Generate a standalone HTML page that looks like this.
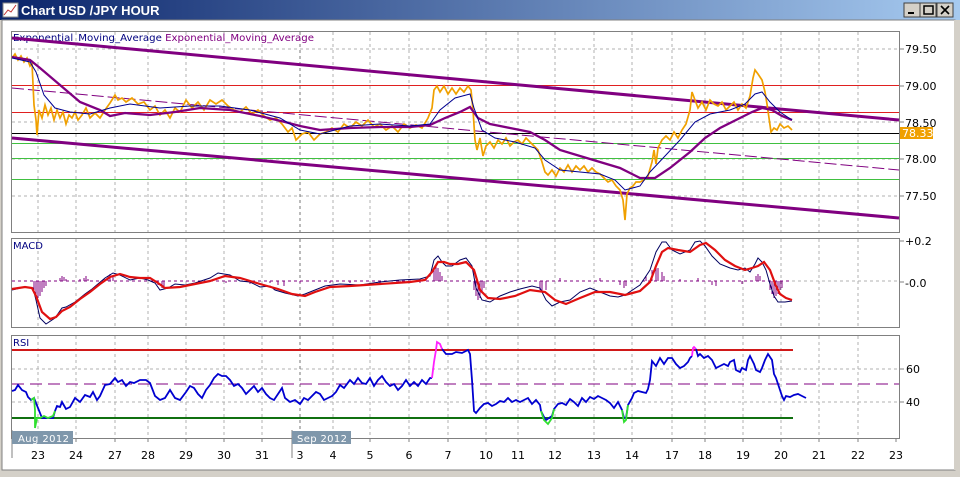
<!DOCTYPE html>
<html><head><meta charset="utf-8"><style>
body{margin:0;width:960px;height:472px;overflow:hidden;background:#d4d0c8;font-family:"Liberation Sans",sans-serif}
</style></head><body>
<svg width="960" height="472" xmlns="http://www.w3.org/2000/svg" font-family="DejaVu Sans, sans-serif">
<defs><linearGradient id="tb" x1="0" x2="1"><stop offset="0" stop-color="#0a246a"/><stop offset="1" stop-color="#a6caf0"/></linearGradient></defs>
<rect x="0" y="0" width="960" height="472" fill="#d4d0c8"/>
<rect x="0" y="0" width="960" height="20" fill="url(#tb)"/>
<rect x="3" y="3" width="15" height="14" fill="#fff" stroke="#888"/>
<polyline points="4,15 8,10 11,12 16,5" fill="none" stroke="#c03030" stroke-width="1"/>
<text x="21" y="15" font-size="13" font-weight="bold" fill="#fff" font-family="Liberation Sans, sans-serif">Chart USD /JPY  HOUR</text>
<g stroke="#404040" fill="#d4d0c8"><rect x="904" y="3" width="16" height="14"/><rect x="920" y="3" width="16" height="14"/><rect x="937" y="3" width="16" height="14"/></g>
<rect x="908" y="12" width="6" height="2" fill="#000"/>
<rect x="924" y="6" width="9" height="8" fill="none" stroke="#000" stroke-width="1.5"/>
<path d="M941 6 L949 14 M949 6 L941 14" stroke="#000" stroke-width="1.6"/>
<rect x="2" y="20" width="953" height="450" fill="#fff" stroke="#808080"/>
<line x1="955" y1="20" x2="955" y2="470" stroke="#d4d0c8" stroke-width="2"/>
<g fill="none" stroke="#808080"><rect x="11.5" y="31.5" width="888" height="201"/><rect x="11.5" y="238.5" width="888" height="89"/><rect x="11.5" y="335.5" width="888" height="103"/></g>
<g stroke="#b0b0b0" stroke-dasharray="3,3">
<path d="M38 32V232M76 32V232M115 32V232M148 32V232M186 32V232M224 32V232M262 32V232M333 32V232M370 32V232M409 32V232M448 32V232M486 32V232M518 32V232M555 32V232M594 32V232M632 32V232M672 32V232M705 32V232M743 32V232M781 32V232M819 32V232M858 32V232"/>
<path d="M38 239V327M76 239V327M115 239V327M148 239V327M186 239V327M224 239V327M262 239V327M333 239V327M370 239V327M409 239V327M448 239V327M486 239V327M518 239V327M555 239V327M594 239V327M632 239V327M672 239V327M705 239V327M743 239V327M781 239V327M819 239V327M858 239V327"/>
<path d="M38 336V438M76 336V438M115 336V438M148 336V438M186 336V438M224 336V438M262 336V438M333 336V438M370 336V438M409 336V438M448 336V438M486 336V438M518 336V438M555 336V438M594 336V438M632 336V438M672 336V438M705 336V438M743 336V438M781 336V438M819 336V438M858 336V438"/>
<path d="M12 49H899M12 122H899M12 159H899M12 196H899M12 369H899M12 402H899M12 281H899"/>
</g>
<path d="M300 32V232M300 239V327M300 336V438" stroke="#777" stroke-dasharray="3,3"/>
<text x="13" y="41" font-size="10" fill="#000080" textLength="301" lengthAdjust="spacingAndGlyphs">Exponential_Moving_Average <tspan fill="#800080">Exponential_Moving_Average</tspan></text>
<line x1="12" y1="85.5" x2="899" y2="85.5" stroke="#e02020"/>
<line x1="12" y1="112.5" x2="899" y2="112.5" stroke="#e02020"/>
<line x1="12" y1="133.5" x2="899" y2="133.5" stroke="#000"/>
<line x1="12" y1="143.5" x2="899" y2="143.5" stroke="#40c040"/>
<line x1="12" y1="158.5" x2="899" y2="158.5" stroke="#40c040"/>
<line x1="12" y1="179.5" x2="899" y2="179.5" stroke="#40c040"/>
<line x1="12" y1="38" x2="899" y2="120" stroke="#800080" stroke-width="3"/>
<line x1="12" y1="138" x2="899" y2="218" stroke="#800080" stroke-width="3"/>
<line x1="12" y1="88" x2="899" y2="170" stroke="#800080" stroke-dasharray="12,4"/>
<polyline fill="none" stroke="#f0a000" stroke-width="1.7" points="12,58 15,54 18,60 21,56 24,62 27,58 30,66 32,63 34,105 36,120 37,135 39,110 42,118 45,105 48,115 51,108 54,120 57,110 60,118 63,112 66,124 69,115 72,118 75,112 78,120 82,115 86,108 90,118 95,113 100,118 105,110 110,103 115,95 118,100 122,98 126,102 132,98 138,104 144,102 150,110 155,106 160,115 165,110 170,118 175,108 180,112 186,100 192,108 198,102 204,110 210,100 216,104 222,100 228,106 234,110 240,112 246,107 252,114 258,110 264,116 270,120 276,118 282,124 288,132 292,128 296,140 302,134 308,132 314,140 320,134 326,132 332,128 338,132 344,124 350,128 356,122 362,126 368,120 374,127 380,124 386,130 392,126 398,132 404,124 410,128 416,125 422,128 428,118 432,108 434,90 437,86 440,92 444,86 448,94 452,88 456,94 460,88 464,92 468,86 471,90 473,110 475,140 477,150 480,138 483,156 486,146 490,142 494,148 498,140 502,144 506,138 510,146 514,142 518,140 522,144 526,138 530,142 534,146 538,150 542,162 545,172 548,175 552,170 556,176 560,168 564,172 568,165 572,172 576,166 580,170 584,166 588,172 592,168 596,172 600,174 604,178 608,182 612,180 616,186 620,190 623,200 625,220 627,194 630,188 633,186 636,182 640,182 644,180 648,176 652,162 654,150 656,164 658,148 662,140 666,136 670,140 674,132 678,138 682,130 686,124 690,110 692,92 695,100 698,108 702,102 706,110 710,100 714,104 718,106 722,102 726,110 730,106 734,102 738,110 742,104 746,108 750,96 753,78 755,70 758,74 762,80 765,92 767,104 769,118 771,132 774,128 777,130 780,124 784,128 788,126 792,130"/>
<polyline fill="none" stroke="#800080" stroke-width="2.3" points="12,57 30,60 40,68 60,85 80,102 100,110 110,116 125,113 150,115 175,112 200,108 230,110 260,116 285,122 300,126 320,130 350,128 380,127 410,127 430,125 445,118 460,112 470,107 478,118 490,124 510,128 530,132 545,140 560,150 580,156 600,162 620,168 640,178 655,178 670,168 690,152 705,138 720,128 740,118 752,112 762,108 772,110 782,116 792,120"/>
<polyline fill="none" stroke="#000090" stroke-width="1" points="12,58 30,62 36,72 44,95 55,108 70,112 90,114 110,108 130,104 160,108 190,106 220,106 250,110 280,118 300,130 320,134 350,126 380,124 410,126 430,124 440,110 455,98 470,94 474,108 482,130 495,138 515,142 535,148 545,160 560,170 580,172 600,174 615,180 625,190 640,186 650,172 665,156 680,140 695,122 710,114 730,110 745,104 755,94 762,92 770,102 780,112 792,120"/>
<rect x="900" y="127" width="33" height="12" fill="#f0a000"/>
<text x="902" y="137" font-size="11" fill="#fff">78.33</text>
<g font-size="11" fill="#000"><text x="905" y="53">79.50</text><text x="905" y="90">79.00</text><text x="905" y="127">78.50</text><text x="905" y="163">78.00</text><text x="905" y="200">77.50</text>
<text x="905" y="245">+0.2</text><text x="905" y="287">-0.0</text><text x="906" y="373">60</text><text x="906" y="406">40</text></g>
<g stroke="#808080"><path d="M899 49h5M899 86h5M899 122h5M899 159h5M899 196h5M899 241h5M899 282h5M899 369h5M899 402h5"/></g>
<text x="13" y="249" font-size="10" fill="#000080">MACD</text>
<path d="M12 281H792" stroke="#800080" stroke-dasharray="3,3"/>
<path stroke="#800080" stroke-width="1" d="M34 281V290M36 281V296M38 281V298M40 281V296M42 281V292M44 281V288M46 281V286M60 281V278M62 281V276M64 281V277M66 281V279M80 281V279M84 281V278M86 281V276M88 281V279M104 281V279M108 281V276M110 281V274M113 281V277M158 281V285M162 281V288M164 281V286M200 281V283M226 281V283M250 281V284M270 281V283M278 281V285M284 281V286M300 281V283M330 281V283M350 281V283M380 281V283M400 281V283M420 281V283M434 281V270M436 281V266M438 281V268M440 281V272M442 281V276M474 281V290M476 281V296M478 281V300M480 281V298M482 281V292M484 281V288M540 281V290M542 281V292M546 281V290M560 281V278M600 281V278M620 281V285M624 281V288M626 281V286M646 281V276M652 281V270M656 281V266M658 281V268M662 281V272M664 281V276M680 281V279M698 281V278M712 281V285M716 281V286M742 281V284M756 281V276M758 281V274M760 281V276M770 281V290M772 281V294M774 281V298M776 281V296M778 281V294M780 281V290M782 281V288"/>
<polyline fill="none" stroke="#000060" stroke-width="1" points="12,290 25,287 33,288 36,300 40,318 46,324 55,318 62,308 66,307 75,302 85,294 92,289 105,278 113,273 120,275 130,280 140,278 148,280 155,283 160,290 168,288 175,284 185,285 195,283 210,278 218,273 230,275 240,281 250,282 260,287 270,286 275,290 285,293 298,296 305,294 315,290 325,286 340,284 360,285 380,282 400,280 420,279 430,276 434,260 438,256 442,262 446,266 452,266 460,260 466,258 472,266 476,288 482,300 490,302 500,296 510,292 520,289 532,286 540,288 546,300 552,306 560,302 570,300 580,292 590,288 600,292 610,296 618,297 625,295 640,285 650,270 656,252 662,242 666,242 672,250 680,254 690,250 695,242 700,241 705,246 712,256 720,264 730,268 738,270 745,268 750,272 755,264 758,258 762,262 766,270 770,284 774,296 778,302 785,302 792,301"/>
<polyline fill="none" stroke="#e01010" stroke-width="2.2" points="12,289 25,287 32,288 36,296 42,312 50,319 56,317 62,311 70,307 80,299 90,292 100,284 110,277 120,274 130,277 140,278 150,278 158,283 165,288 180,287 195,284 210,281 225,276 240,278 260,284 278,289 292,294 305,296 315,292 330,287 350,286 380,284 410,282 425,280 432,272 438,262 444,262 450,264 458,264 466,262 474,270 480,290 488,298 500,299 515,296 530,290 545,292 555,300 566,304 580,298 595,292 610,292 625,295 640,291 650,282 656,266 662,252 668,248 678,250 690,252 700,245 706,243 715,250 725,260 735,266 745,270 752,268 758,266 764,262 770,270 776,286 780,294 786,298 792,300"/>
<text x="13" y="346" font-size="10" fill="#000080">RSI</text>
<line x1="12" y1="350" x2="793" y2="350" stroke="#d01818" stroke-width="2"/>
<line x1="12" y1="418" x2="793" y2="418" stroke="#107010" stroke-width="2"/>
<path d="M12 384H899" stroke="#800080" stroke-dasharray="12,6"/>
<polyline fill="none" stroke="#0000d0" stroke-width="1.8" points="12,391 15,390 18,385 22,390 26,392 28,397 31,400 34,398 42,418 47,418 50,418 53,418 55,411 57,406 60,407 62,402 66,409 70,407 75,398 80,402 85,395 90,397 93,392 97,400 100,396 105,385 110,384 115,378 118,382 122,380 126,386 130,382 134,383 140,380 146,380 150,383 155,396 160,400 165,398 170,390 175,398 180,400 186,392 190,386 194,388 198,394 202,398 206,390 210,385 214,378 218,374 222,376 226,376 230,380 234,386 238,384 242,388 246,394 250,390 254,386 258,392 262,388 266,394 270,398 274,400 278,394 282,388 285,398 290,402 295,400 300,404 304,398 308,400 312,396 316,392 320,394 324,400 328,398 332,396 336,392 340,385 344,388 350,380 354,384 358,378 362,383 366,384 370,378 374,386 378,380 382,376 386,382 390,386 394,384 398,390 402,386 406,380 410,386 414,382 418,386 422,380 426,384 430,378 432,378"/>
<polyline fill="none" stroke="#ff20ff" stroke-width="1.8" points="432,378 434,362 436,350 437,342 440,344 442,349"/>
<polyline fill="none" stroke="#0000d0" stroke-width="1.8" points="442,349 446,354 452,354 456,352 462,353 468,350 470,354 472,380 474,411 476,413 480,408 484,404 488,403 492,406 496,404 500,401 504,402 508,398 512,402 516,400 520,402 524,400 528,398 532,404 536,400 540,405 541,411 544,417 546,420 549,418 552,416 554,409 558,404 562,403 566,405 570,399 574,402 578,406 582,398 586,402 590,397 594,399 598,396 602,398 606,400 610,403 614,408 618,402 622,410 624,418 626,418 628,405 632,398 634,393 638,391 642,392 646,393 648,389 650,380 652,361 656,366 660,358 664,364 668,358 672,358 676,364 680,368 684,366 688,362 690,358 692,356"/>
<polyline fill="none" stroke="#ff20ff" stroke-width="1.8" points="692,356 693,348 694,347 696,349"/>
<polyline fill="none" stroke="#0000d0" stroke-width="1.8" points="696,349 698,356 700,354 704,358 708,356 712,360 716,368 720,366 724,364 728,366 730,362 734,360 736,370 740,372 742,368 746,370 748,360 750,356 754,364 756,370 760,372 762,368 765,360 768,354 772,360 774,374 776,378 780,390 782,396 784,400 786,396 790,397 794,395 798,394 802,396 806,398"/>
<polyline fill="none" stroke="#30e030" stroke-width="1.8" points="31,400 34,398 35,410 35,428 37,418 40,418 44,416 48,418 53,416 55,411"/>
<polyline fill="none" stroke="#30e030" stroke-width="1.8" points="541,411 544,420 548,424 552,418 554,409"/>
<polyline fill="none" stroke="#30e030" stroke-width="1.8" points="622,410 624,422 626,420 628,405"/>
<g stroke="#808080"><path d="M38 438v4M76 438v4M115 438v4M148 438v4M186 438v4M224 438v4M262 438v4M300 438v4M333 438v4M370 438v4M409 438v4M448 438v4M486 438v4M518 438v4M555 438v4M594 438v4M632 438v4M672 438v4M705 438v4M743 438v4M781 438v4M819 438v4M858 438v4M896 438v4"/><path d="M292 430v28M12 430v28"/></g>
<rect x="12" y="431" width="61" height="13" fill="#7f97ab"/>
<text x="18" y="442" font-size="10" fill="#fff" textLength="51">Aug 2012</text>
<rect x="292" y="431" width="59" height="13" fill="#7f97ab"/>
<text x="297" y="442" font-size="10" fill="#fff" textLength="50">Sep 2012</text>
<g font-size="11" fill="#000" text-anchor="middle"><text x="38" y="459">23</text><text x="76" y="459">24</text><text x="115" y="459">27</text><text x="148" y="459">28</text><text x="186" y="459">29</text><text x="224" y="459">30</text><text x="262" y="459">31</text><text x="300" y="459">3</text><text x="333" y="459">4</text><text x="370" y="459">5</text><text x="409" y="459">6</text><text x="448" y="459">7</text><text x="486" y="459">10</text><text x="518" y="459">11</text><text x="555" y="459">12</text><text x="594" y="459">13</text><text x="632" y="459">14</text><text x="672" y="459">17</text><text x="705" y="459">18</text><text x="743" y="459">19</text><text x="781" y="459">20</text><text x="819" y="459">21</text><text x="858" y="459">22</text><text x="896" y="459">23</text></g>
</svg>
</body></html>
